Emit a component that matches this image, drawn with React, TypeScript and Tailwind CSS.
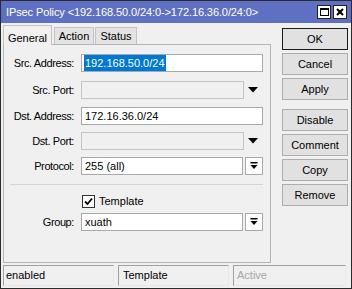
import React from 'react'

const font = { fontFamily: '"Liberation Sans", Arial, sans-serif' }

function DropIcon() {
  return (
    <svg width="8" height="8" viewBox="0 0 8 8">
      <rect x="0.5" y="0" width="7" height="1.5" fill="#000" />
      <polygon points="0.5,3 7.5,3 4,7" fill="#000" />
    </svg>
  )
}

function Label({ children }: { children: React.ReactNode }) {
  return (
    <div className="w-[71px] shrink-0 text-right tracking-[-0.4px] text-[11px] text-black pr-[1px]">{children}</div>
  )
}

function TextInput({ value, selected }: { value: string; selected?: boolean }) {
  return (
    <div className="ml-[6px] h-[18px] w-[182px] border border-[#a9a9a9] bg-white flex items-center pl-[2px] text-[11px]">
      {selected ? <span className="bg-[#0078d7] text-white px-[1px]">{value}</span> : <span className="px-[1px]">{value}</span>}
    </div>
  )
}

function DisabledInput() {
  return (
    <div className="ml-[6px] flex items-center">
      <div className="h-[18px] w-[163px] border border-[#c4c4c4] bg-[#f0f0f0]" />
      <svg className="ml-[4px]" width="10" height="6" viewBox="0 0 10 6">
        <polygon points="0,0 10,0 5,5.5" fill="#000" />
      </svg>
    </div>
  )
}

function ComboInput({ value }: { value: string }) {
  return (
    <div className="ml-[6px] flex items-center gap-[2px]">
      <div className="h-[18px] w-[162px] border border-[#a9a9a9] bg-white flex items-center pl-[3px] text-[11px]">{value}</div>
      <div className="h-[18px] w-[18px] border border-[#a9a9a9] bg-white flex items-center justify-center">
        <DropIcon />
      </div>
    </div>
  )
}

function SideButton({ label, primary }: { label: string; primary?: boolean }) {
  return (
    <div
      className={
        'h-[22px] w-[66px] flex items-center justify-center text-[11px] bg-[#e1e1e1] border ' +
        (primary ? 'border-[#1a1a1a]' : 'border-[#adadad]')
      }
    >
      {label}
    </div>
  )
}

export default function App() {
  return (
    <div style={font} className="w-[352px] h-[289px] border border-[#2b2b2b] bg-[#f0f0f0] flex flex-col text-black overflow-hidden">
      <div className="h-[22px] bg-[#5f70c3] flex items-center pl-[5px] pr-[4px]">
        <span className="text-white text-[11px] tracking-[-0.1px] flex-1">IPsec Policy &lt;192.168.50.0/24:0-&gt;172.16.36.0/24:0&gt;</span>
        <div className="flex gap-[2px]">
          <div className="w-[14px] h-[14px] bg-white border border-[#222] flex items-center justify-center">
            <div className="w-[9px] h-[8px] border border-black border-t-2" />
          </div>
          <div className="w-[14px] h-[14px] bg-white border border-[#222] flex items-center justify-center">
            <svg width="8" height="8" viewBox="0 0 8 8">
              <path d="M1 1L7 7M7 1L1 7" stroke="#000" strokeWidth="2" />
            </svg>
          </div>
        </div>
      </div>

      <div className="flex flex-1">
        <div className="flex flex-col pl-[2px] pt-[1px]">
          <div className="flex items-end h-[20px] text-[11px]">
            <div className="h-[20px] w-[49px] border border-b-0 border-[#c4c4c4] bg-[#f0f0f0] flex items-start justify-center pt-[4px] -mb-[1px] relative z-10">General</div>
            <div className="ml-[2px] h-[17px] w-[40px] border border-b-0 border-[#c4c4c4] bg-[#e3e3e3] flex items-center justify-center pt-[1px]">Action</div>
            <div className="ml-[1px] h-[17px] w-[42px] border border-b-0 border-[#c4c4c4] bg-[#e3e3e3] flex items-center justify-center pt-[1px]">Status</div>
          </div>
          <div className="w-[268px] h-[219px] border border-[#b5b5b5] flex flex-col">
            <div className="flex items-center mt-[9px]">
              <Label>Src. Address:</Label>
              <TextInput value="192.168.50.0/24" selected />
            </div>
            <div className="flex items-center mt-[9px]">
              <Label>Src. Port:</Label>
              <DisabledInput />
            </div>
            <div className="flex items-center mt-[8px]">
              <Label>Dst. Address:</Label>
              <TextInput value="172.16.36.0/24" />
            </div>
            <div className="flex items-center mt-[7px]">
              <Label>Dst. Port:</Label>
              <DisabledInput />
            </div>
            <div className="flex items-center mt-[7px]">
              <Label>Protocol:</Label>
              <ComboInput value="255 (all)" />
            </div>
            <div className="mt-[9px] ml-[6px] w-[253px] h-[1px] bg-[#d5d5d5]" />
            <div className="flex items-center mt-[10px] ml-[78px] h-[13px]">
              <div className="w-[13px] h-[13px] border border-[#333] bg-white flex items-center justify-center">
                <svg width="9" height="9" viewBox="0 0 9 9">
                  <path d="M1 4.5L3.5 7L8 1.5" stroke="#000" strokeWidth="1.8" fill="none" />
                </svg>
              </div>
              <span className="ml-[4px] text-[11px]">Template</span>
            </div>
            <div className="flex items-center mt-[5px]">
              <Label>Group:</Label>
              <ComboInput value="xuath" />
            </div>
          </div>
        </div>

        <div className="ml-[11px] pt-[5px] flex flex-col">
          <SideButton label="OK" primary />
          <div className="mt-[3px]"><SideButton label="Cancel" /></div>
          <div className="mt-[3px]"><SideButton label="Apply" /></div>
          <div className="mt-[9px]"><SideButton label="Disable" /></div>
          <div className="mt-[3px]"><SideButton label="Comment" /></div>
          <div className="mt-[3px]"><SideButton label="Copy" /></div>
          <div className="mt-[3px]"><SideButton label="Remove" /></div>
        </div>
      </div>

      <div className="flex gap-[4px] pl-[2px] pr-[5px] pb-[2px] pt-[2px] text-[11px]">
        <div className="h-[21px] w-[111px] border border-[#a0a0a0] border-r-[#e8e8e8] border-b-[#e8e8e8] flex items-center pl-[2px]">enabled</div>
        <div className="h-[21px] w-[111px] border border-[#a0a0a0] border-r-[#e8e8e8] border-b-[#e8e8e8] flex items-center pl-[4px]">Template</div>
        <div className="h-[21px] flex-1 border border-[#a0a0a0] border-r-[#e8e8e8] border-b-[#e8e8e8] flex items-center pl-[3px] text-[#a8a8a8]">Active</div>
      </div>
    </div>
  )
}
